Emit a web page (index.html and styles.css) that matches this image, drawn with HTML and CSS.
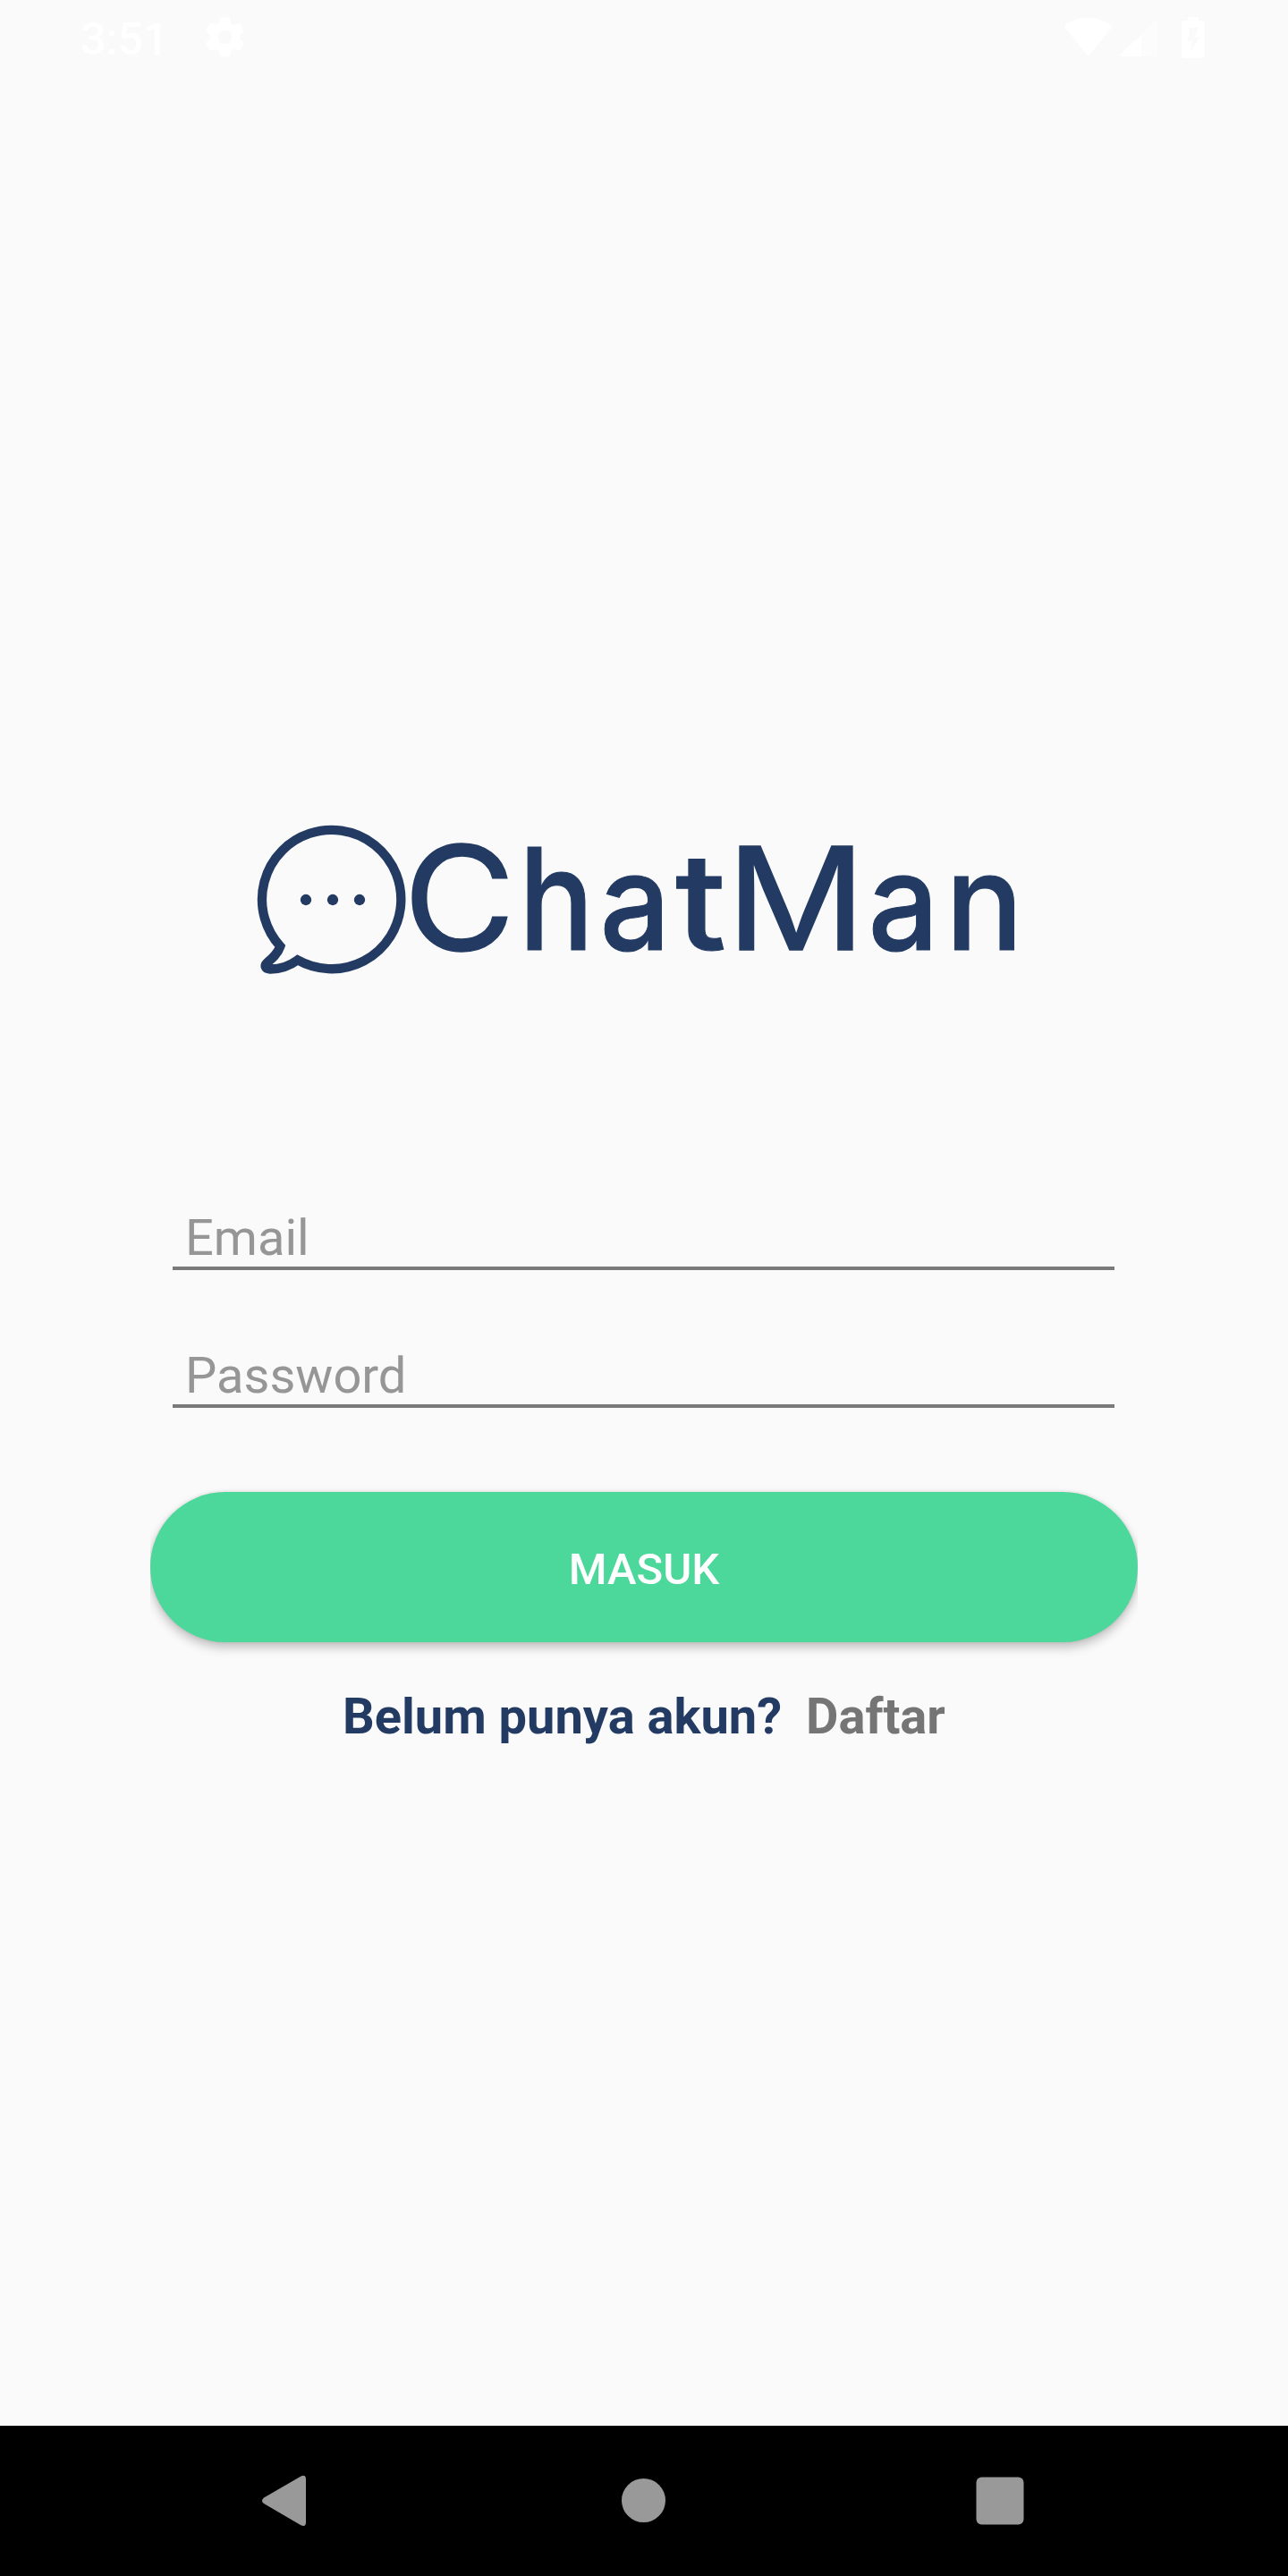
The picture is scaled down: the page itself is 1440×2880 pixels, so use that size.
FILE: index.html
```html
<!DOCTYPE html>
<html lang="id">
<head>
<meta charset="utf-8">
<title>ChatMan</title>
<link rel="stylesheet" href="styles.css">
</head>
<body>
<header class="status">
  <span class="time">3:51</span>
  <svg class="gear" viewBox="0 0 24 24"><path d="M19.43 12.98c.04-.32.07-.64.07-.98s-.03-.66-.07-.98l2.11-1.65c.19-.15.24-.42.12-.64l-2-3.46c-.12-.22-.39-.3-.61-.22l-2.49 1c-.52-.4-1.08-.73-1.69-.98l-.38-2.65C14.46 2.18 14.25 2 14 2h-4c-.25 0-.46.18-.49.42l-.38 2.65c-.61.25-1.17.59-1.69.98l-2.49-1c-.23-.09-.49 0-.61.22l-2 3.46c-.13.22-.07.49.12.64l2.11 1.65c-.04.32-.07.65-.07.98s.03.66.07.98l-2.11 1.65c-.19.15-.24.42-.12.64l2 3.46c.12.22.39.3.61.22l2.49-1c.52.4 1.08.73 1.69.98l.38 2.65c.03.24.24.42.49.42h4c.25 0 .46-.18.49-.42l.38-2.65c.61-.25 1.17-.59 1.69-.98l2.49 1c.23.09.49 0 .61-.22l2-3.46c.12-.22.07-.49-.12-.64l-2.11-1.65zM12 15.5c-1.93 0-3.5-1.57-3.5-3.5s1.57-3.5 3.5-3.5 3.5 1.57 3.5 3.5-1.57 3.5-3.5 3.5z"/></svg>
  <svg class="signals" viewBox="0 0 160 50">
    <path d="M1.500 13Q-1 10 2 8Q26-7 51 8Q55 10 52 13L29 41Q26.500 44 24 41Z"/>
    <path opacity=".45" d="M86 20L101 4Q104 1 104 5V42Q104 44 102 44H86Z"/>
    <path d="M86 20V44H64Q60 44 63 41Z"/>
    <path fill-rule="evenodd" d="M138 0H150V4H154Q157 4 157 7V43Q157 46 154 46H134Q131 46 131 43V7Q131 4 134 4H138ZM140 12L138 27H143L140 40L151 23H145L150 12Z"/>
  </svg>
</header>
<main class="login">
  <svg class="logo" viewBox="0 0 864 185" role="img" aria-label="ChatMan">
    <g transform="translate(-9 -15) scale(.33333)">
      <path class="bubble" d="M185 520A233 233 0 1 0 127 474C118 500 100 515 83 529C73 538 75 550 92 550.500C125 551 155 542 185 520Z"/>
      <circle cx="213" cy="318" r="18.500"/><circle cx="303" cy="318" r="18.500"/><circle cx="393" cy="318" r="18.500"/>
    </g>
    <text class="wordmark" y="147"><tspan class="round" x="171" textLength="125" lengthAdjust="spacingAndGlyphs">C</tspan><tspan class="tall" x="300" textLength="84" lengthAdjust="spacingAndGlyphs">h</tspan><tspan class="small" x="390.500" textLength="79" lengthAdjust="spacingAndGlyphs">a</tspan><tspan class="small" x="475" textLength="57" lengthAdjust="spacingAndGlyphs">t</tspan><tspan class="cap" x="532" textLength="156" lengthAdjust="spacingAndGlyphs">M</tspan><tspan class="small" x="690.500" textLength="79" lengthAdjust="spacingAndGlyphs">a</tspan><tspan class="small" x="777" textLength="87" lengthAdjust="spacingAndGlyphs">n</tspan></text>
  </svg>
  <form class="form">
    <input class="field" type="email" placeholder="Email">
    <input class="field" type="password" placeholder="Password">
    <button class="submit" type="button">MASUK</button>
  </form>
  <p class="signup"><span>Belum punya akun?</span><a class="register">Daftar</a></p>
</main>
<nav class="navbar">
  <svg class="keys" viewBox="0 0 1440 168">
    <path d="M295 80.500L336 56.700Q342 54 342 60V108Q342 114 336 111L295 87Q291 84 295 80.500Z"/>
    <circle cx="719.500" cy="83.500" r="24.500"/>
    <rect x="1091.500" y="57.500" width="53" height="53" rx="6"/>
  </svg>
</nav>
</body>
</html>
```
FILE: styles.css
```css
* { box-sizing: border-box; }
body {
  margin: 0;
  width: 1440px;
  height: 2880px;
  display: flex;
  flex-direction: column;
  background: #fafafa;
  font-family: Roboto, sans-serif;
}
svg { display: block; }
.status {
  height: 84px;
  display: flex;
  align-items: flex-start;
  padding: 15px 90px 0;
  color: #fff;
  fill: #fff;
}
.time {
  width: 135px;
  font-size: 50px;
  font-weight: 500;
  line-height: 58px;
}
.gear { width: 53px; height: 53px; }
.signals { width: 160px; height: 50px; margin: 4px 0 0 auto; }
.login {
  flex: 1;
  display: flex;
  flex-direction: column;
  padding: 831px 168px 0;
}
.logo {
  width: 864px;
  height: 185px;
  margin-left: 112px;
  fill: #233b63;
  overflow: visible;
}
.bubble { fill: none; stroke: #233b63; stroke-width: 31; }
.wordmark { font: 500 160px Inter, sans-serif; stroke: #233b63; stroke-width: 1px; }
.round { font-size: 162px; font-weight: 400; stroke-width: 1.5px; }
.cap { font-weight: 400; stroke-width: 1.5px; }
.tall { font-size: 158px; }
.small { font-size: 150px; }
.form {
  display: flex;
  flex-direction: column;
  margin-top: 234px;
}
.field {
  height: 86px;
  margin: 0 26px 68px 25px;
  padding: 18px 14px 0;
  border: 0;
  border-bottom: 4px solid #7a7a7a;
  border-radius: 0;
  outline: 0;
  background: none;
  font: 400 56px/64px Roboto, sans-serif;
}
.field::placeholder { color: #969696; opacity: 1; }
.submit {
  height: 168px;
  margin-top: 26px;
  padding: 5px 0 0;
  border: 0;
  border-radius: 84px;
  background: #4cd79b;
  color: #fff;
  font: 500 49px/58px Roboto, sans-serif;
  box-shadow: 0 6px 12px rgba(0, 0, 0, .23), 0 0 4px rgba(0, 0, 0, .1);
  clip-path: inset(-20px 0 -40px 0);
}
.signup {
  display: flex;
  gap: 27px;
  margin: 50px 0 0 215px;
  font-size: 56px;
  font-weight: 700;
  line-height: 66px;
  color: #233b63;
}
.register { color: #757575; }
.navbar { height: 168px; background: #000; }
.keys { width: 1440px; height: 168px; fill: #999; }
```
